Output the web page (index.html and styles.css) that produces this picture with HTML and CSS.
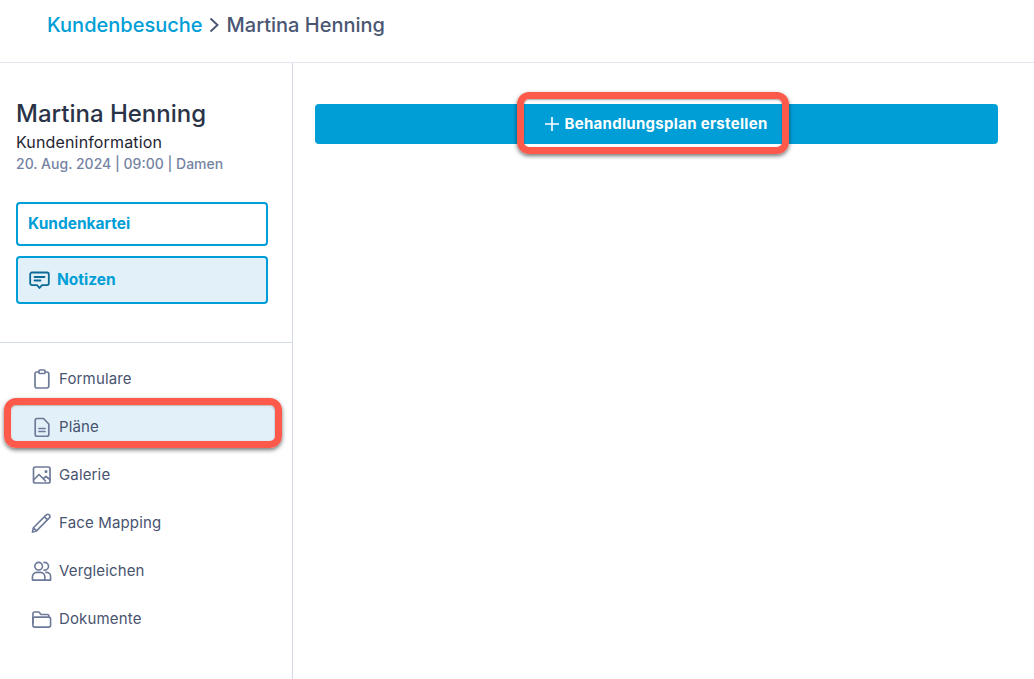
FILE: index.html
```html
<!DOCTYPE html>
<html lang="de">
<head>
<meta charset="utf-8">
<title>Martina Henning</title>
<link rel="stylesheet" href="styles.css">
</head>
<body>
<header class="topbar">
  <a class="crumb-link">Kundenbesuche</a>
  <svg class="crumb-sep" width="12" height="16" viewBox="0 0 12 16" fill="none"><path d="M1.500 1.500 8.500 8l-7 6.500" stroke="#4a5672" stroke-width="1.900"/></svg>
  <span class="crumb-current">Martina Henning</span>
</header>
<div class="layout">
  <aside class="sidebar">
    <section class="client">
      <h1 class="client-name">Martina Henning</h1>
      <div class="client-sub">Kundeninformation</div>
      <div class="client-meta">20. Aug. 2024 | 09:00 | Damen</div>
      <button class="card-btn card-plain">Kundenkartei</button>
      <button class="card-btn card-active">
        <svg width="21" height="19" viewBox="0 0 21 19" fill="none" stroke="#0b6a96" stroke-width="1.800" stroke-linejoin="round" stroke-linecap="round"><path d="M3 1.500h15a1.800 1.800 0 0 1 1.800 1.800v9a1.800 1.800 0 0 1-1.800 1.800h-5l-2.500 2.900-2.500-2.900H3a1.800 1.800 0 0 1-1.800-1.800v-9A1.800 1.800 0 0 1 3 1.500Z"/><path d="M5.500 6h10M5.500 9.500h6"/></svg>
        Notizen
      </button>
    </section>
    <nav class="nav">
      <a class="nav-item"><span class="nav-icon"><svg width="20" height="20" viewBox="0 0 20 20" fill="none" stroke="#6d7a99" stroke-width="1.700" stroke-linejoin="round"><path d="M7 3H5A1.800 1.800 0 0 0 3 4.800v12.400A1.800 1.800 0 0 0 5 19h10a1.800 1.800 0 0 0 1.800-1.800V4.800A1.800 1.800 0 0 0 15 3H13"/><rect x="7" y="1" width="6" height="3.500" rx="1"/></svg></span>Formulare</a>
      <a class="nav-item nav-item-active"><span class="nav-icon"><svg width="20" height="20" viewBox="0 0 20 20" fill="none" stroke="#6d7a99" stroke-width="1.700" stroke-linejoin="round" stroke-linecap="round"><path d="M5 1.500h6.500l5.300 5.500v10.500a1.800 1.800 0 0 1-1.800 1.800H5a1.800 1.800 0 0 1-1.800-1.800V3.300A1.800 1.800 0 0 1 5 1.500Z"/><path d="M7 11.500h6M7 14.500h6"/></svg></span>Pläne</a>
      <a class="nav-item"><span class="nav-icon"><svg width="20" height="20" viewBox="0 0 20 20" fill="none" stroke="#6d7a99" stroke-width="1.700" stroke-linejoin="round" stroke-linecap="round"><rect x="1.500" y="2" width="16.500" height="16" rx="1.800"/><path d="M2 14.500 7 9.500l6.500 6.500M12 13l2-1.500 4 3"/><circle cx="14" cy="6.500" r=".7"/></svg></span>Galerie</a>
      <a class="nav-item"><span class="nav-icon"><svg width="22" height="22" viewBox="0 0 22 22" fill="none" stroke="#6d7a99" stroke-width="1.700" stroke-linejoin="round"><path d="M1.500 20.500 2.500 16 16 2.500a2.200 2.200 0 0 1 3.200 0 2.200 2.200 0 0 1 0 3.200L5.800 19.300ZM14 4.500l3.500 3.500M2.500 16l3.300 3.300"/></svg></span>Face Mapping</a>
      <a class="nav-item"><span class="nav-icon"><svg width="22" height="20" viewBox="0 0 22 20" fill="none" stroke="#6d7a99" stroke-width="1.700" stroke-linejoin="round"><circle cx="8" cy="5" r="4"/><path d="M13 1.300a4 4 0 1 1 0 7.500"/><path d="M1.500 19.500v-3.300A4.500 4.500 0 0 1 6 11.500h4a4.500 4.500 0 0 1 4.500 4.700v3.300Z"/><path d="M15 11.500h1.500a4 4 0 0 1 4 4.500v3.500h-6"/></svg></span>Vergleichen</a>
      <a class="nav-item"><span class="nav-icon"><svg width="22" height="20" viewBox="0 0 22 20" fill="none" stroke="#6d7a99" stroke-width="1.700" stroke-linejoin="round"><path d="M2 15V4.500A1.800 1.800 0 0 1 3.800 2.700h4.500l2.200 2.600h6.500A1.800 1.800 0 0 1 18.800 7v1"/><rect x="2" y="8" width="18.500" height="10.500" rx="2"/></svg></span>Dokumente</a>
    </nav>
  </aside>
  <main class="main">
    <button class="primary-btn">
      <svg width="14" height="14" viewBox="0 0 14 14" stroke="#fff" stroke-width="1.600"><path d="M7 0v14M0 7h14"/></svg>
      Behandlungsplan erstellen
    </button>
  </main>
</div>
<div class="callout callout-nav"></div>
<div class="callout callout-btn"></div>
</body>
</html>
```
FILE: styles.css
```css
* { box-sizing: border-box; }
html, body { margin: 0; height: 100%; }
body {
  background: #fff;
  font-family: Inter, "Liberation Sans", sans-serif;
  color: #48536f;
  overflow: hidden;
  position: relative;
}
.topbar {
  height: 63px;
  border-bottom: 1px solid #e4e7ed;
  display: flex;
  align-items: flex-start;
  gap: 6px;
  padding: 13px 0 0 47px;
  font-size: 20px;
  line-height: 24px;
  font-weight: 500;
}
.crumb-link { color: #009ed6; }
.crumb-sep { margin-top: 4px; }
.crumb-current { color: #4a5672; }
.layout { display: flex; height: 616px; }
.sidebar {
  width: 293px;
  border-right: 1px solid #d3d9e5;
  flex: none;
}
.client {
  height: 280px;
  padding: 36px 24px 0 16px;
  border-bottom: 1px solid #d3d9e5;
}
.client-name {
  margin: 0;
  font-size: 24px;
  line-height: 30px;
  font-weight: 500;
  color: #2a3348;
}
.client-sub {
  margin-top: 3px;
  font-size: 16px;
  line-height: 20px;
  letter-spacing: .15px;
  color: #1f2533;
}
.client-meta {
  margin-top: 2px;
  font-size: 14px;
  line-height: 20px;
  font-weight: 500;
  color: #7583a3;
}
.card-btn {
  display: flex;
  align-items: center;
  gap: 7px;
  width: 252px;
  border: 2px solid #009ed6;
  border-radius: 4px;
  font: 700 15.500px/20px Inter, "Liberation Sans", sans-serif;
  color: #009ed6;
  background: #fff;
}
.card-plain { height: 44px; margin-top: 28px; padding: 0 10px; }
.card-active { height: 48px; margin-top: 10px; padding: 0 11px; background: #e2f1f9; }
.nav { padding-top: 16px; display: flex; flex-direction: column; gap: 8px; }
.nav-item {
  display: flex;
  align-items: center;
  height: 40px;
  margin: 0 16px 0 12px;
  padding-left: 19px;
  gap: 7px;
  font-size: 15px;
  line-height: 20px;
  letter-spacing: .15px;
  border-radius: 4px;
}
.nav-item-active { background: #e2f1f9; }
.nav-icon { width: 21px; display: flex; justify-content: center; flex: none; }
.main { flex: 1; padding: 41px 36px 0 22px; }
.primary-btn {
  width: 683px;
  height: 40px;
  border: 0;
  border-radius: 4px;
  background: #009ed6;
  color: #fff;
  font: 700 15px/20px Inter, "Liberation Sans", sans-serif;
  letter-spacing: .3px;
  display: flex;
  align-items: center;
  justify-content: center;
  gap: 5px;
}
.callout {
  position: absolute;
  border: 7px solid #fd5a4c;
  border-radius: 12px;
  box-shadow: 0 2px 4px rgba(0,0,0,.55), inset 0 1px 2px rgba(0,0,0,.35);
}
.callout-nav { left: 4px; top: 398px; width: 278px; height: 50px; }
.callout-btn { left: 517px; top: 92px; width: 272px; height: 62px; }
```
